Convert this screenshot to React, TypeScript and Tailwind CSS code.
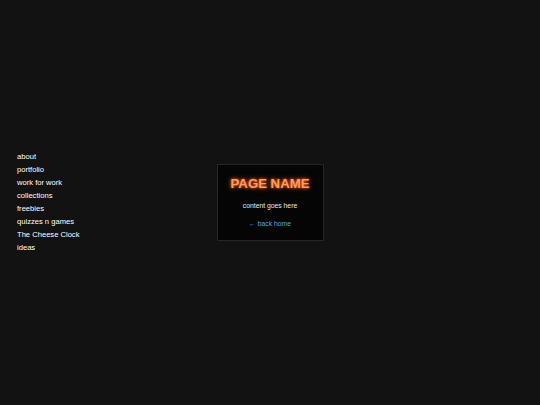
const links = [
  'about',
  'portfolio',
  'work for work',
  'collections',
  'freebies',
  'quizzes n games',
  'The Cheese Clock',
  'ideas',
]

export default function App() {
  return (
    <div
      className="grid h-screen w-full grid-cols-[1fr_auto_1fr] items-center bg-[#121212] text-white"
      style={{ fontFamily: '"Liberation Sans", Arial, sans-serif' }}
    >
      <nav className="flex flex-col pl-[17px] pb-[2px]">
        {links.map((l) => (
          <a key={l} href="#" className="block text-[7.6px] leading-[13px] text-white">
            {l}
          </a>
        ))}
      </nav>

      <div className="flex w-[107px] flex-col items-center border border-[#262626] bg-[#050505] pt-[11px] pb-[12px]">
        <h1
          className="text-[13.2px] font-bold leading-[16px] text-[#ff9a62]"
          style={{ textShadow: '0 0 3px #ff6a1a, 0 0 6px rgba(255,110,40,0.6)' }}
        >
          PAGE NAME
        </h1>
        <p className="mt-[9px] text-[6.8px] leading-[9px] text-[#e8e8e8]">content goes here</p>
        <a href="#" className="mt-[9px] text-[6.8px] leading-[9px] text-[#5aa8d8]">
          ← back home
        </a>
      </div>

      <div />
    </div>
  )
}
